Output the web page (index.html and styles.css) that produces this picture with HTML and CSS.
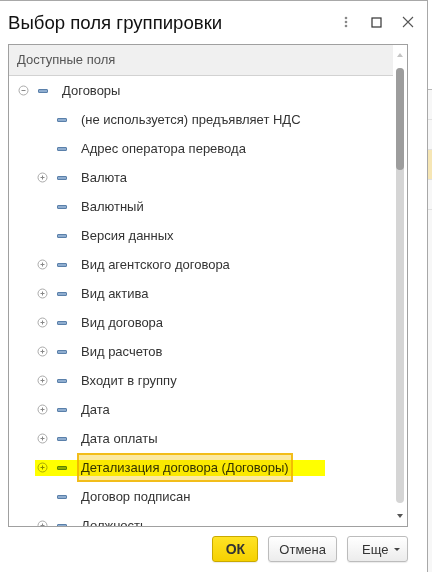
FILE: index.html
```html
<!DOCTYPE html>
<html lang="ru">
<head>
  <meta charset="UTF-8" />
  <meta name="viewport" content="width=device-width, initial-scale=1.0" />
  <title>Выбор поля группировки</title>
  <link rel="stylesheet" href="styles.css">
</head>
<body>
  <div class="screen">
    <div class="dialog">
      <div class="titlebar">
        <h1>Выбор поля группировки</h1>
        <div class="tools">
          <span class="tool">
            <svg width="4" height="12" viewBox="0 0 4 12"><circle cx="2" cy="2" r="1.3" fill="#888"/><circle cx="2" cy="6" r="1.3" fill="#888"/><circle cx="2" cy="10" r="1.3" fill="#888"/></svg>
          </span>
          <span class="tool">
            <svg width="11" height="11" viewBox="0 0 11 11"><rect x="1" y="1" width="9" height="9" fill="none" stroke="#333" stroke-width="1.2"/></svg>
          </span>
          <span class="tool">
            <svg width="12" height="12" viewBox="0 0 12 12"><path d="M1 1 L11 11 M11 1 L1 11" stroke="#555" stroke-width="1.1"/></svg>
          </span>
        </div>
      </div>

      <div class="panel">
        <div class="list">
          <div class="list-head">Доступные поля</div>
          <div class="tree">
            <div class="row lvl0">
              <span class="toggle"><svg width="11" height="11" viewBox="0 0 11 11"><circle cx="5.5" cy="5.5" r="4.5" fill="#fff" stroke="#aaa"/><path d="M3.5 5.5 H7.5" stroke="#888"/></svg></span>
              <span class="icon"><i class="bar"></i></span>
              <span class="label">Договоры</span>
            </div>
            <div class="row lvl1">
              <span class="toggle"></span>
              <span class="icon"><i class="bar"></i></span>
              <span class="label">(не используется) предъявляет НДС</span>
            </div>
            <div class="row lvl1">
              <span class="toggle"></span>
              <span class="icon"><i class="bar"></i></span>
              <span class="label">Адрес оператора перевода</span>
            </div>
            <div class="row lvl1">
              <span class="toggle"><svg width="11" height="11" viewBox="0 0 11 11"><circle cx="5.5" cy="5.5" r="4.5" fill="#fff" stroke="#aaa"/><path d="M3.5 5.5 H7.5 M5.5 3.5 V7.5" stroke="#888"/></svg></span>
              <span class="icon"><i class="bar"></i></span>
              <span class="label">Валюта</span>
            </div>
            <div class="row lvl1">
              <span class="toggle"></span>
              <span class="icon"><i class="bar"></i></span>
              <span class="label">Валютный</span>
            </div>
            <div class="row lvl1">
              <span class="toggle"></span>
              <span class="icon"><i class="bar"></i></span>
              <span class="label">Версия данных</span>
            </div>
            <div class="row lvl1">
              <span class="toggle"><svg width="11" height="11" viewBox="0 0 11 11"><circle cx="5.5" cy="5.5" r="4.5" fill="#fff" stroke="#aaa"/><path d="M3.5 5.5 H7.5 M5.5 3.5 V7.5" stroke="#888"/></svg></span>
              <span class="icon"><i class="bar"></i></span>
              <span class="label">Вид агентского договора</span>
            </div>
            <div class="row lvl1">
              <span class="toggle"><svg width="11" height="11" viewBox="0 0 11 11"><circle cx="5.5" cy="5.5" r="4.5" fill="#fff" stroke="#aaa"/><path d="M3.5 5.5 H7.5 M5.5 3.5 V7.5" stroke="#888"/></svg></span>
              <span class="icon"><i class="bar"></i></span>
              <span class="label">Вид актива</span>
            </div>
            <div class="row lvl1">
              <span class="toggle"><svg width="11" height="11" viewBox="0 0 11 11"><circle cx="5.5" cy="5.5" r="4.5" fill="#fff" stroke="#aaa"/><path d="M3.5 5.5 H7.5 M5.5 3.5 V7.5" stroke="#888"/></svg></span>
              <span class="icon"><i class="bar"></i></span>
              <span class="label">Вид договора</span>
            </div>
            <div class="row lvl1">
              <span class="toggle"><svg width="11" height="11" viewBox="0 0 11 11"><circle cx="5.5" cy="5.5" r="4.5" fill="#fff" stroke="#aaa"/><path d="M3.5 5.5 H7.5 M5.5 3.5 V7.5" stroke="#888"/></svg></span>
              <span class="icon"><i class="bar"></i></span>
              <span class="label">Вид расчетов</span>
            </div>
            <div class="row lvl1">
              <span class="toggle"><svg width="11" height="11" viewBox="0 0 11 11"><circle cx="5.5" cy="5.5" r="4.5" fill="#fff" stroke="#aaa"/><path d="M3.5 5.5 H7.5 M5.5 3.5 V7.5" stroke="#888"/></svg></span>
              <span class="icon"><i class="bar"></i></span>
              <span class="label">Входит в группу</span>
            </div>
            <div class="row lvl1">
              <span class="toggle"><svg width="11" height="11" viewBox="0 0 11 11"><circle cx="5.5" cy="5.5" r="4.5" fill="#fff" stroke="#aaa"/><path d="M3.5 5.5 H7.5 M5.5 3.5 V7.5" stroke="#888"/></svg></span>
              <span class="icon"><i class="bar"></i></span>
              <span class="label">Дата</span>
            </div>
            <div class="row lvl1">
              <span class="toggle"><svg width="11" height="11" viewBox="0 0 11 11"><circle cx="5.5" cy="5.5" r="4.5" fill="#fff" stroke="#aaa"/><path d="M3.5 5.5 H7.5 M5.5 3.5 V7.5" stroke="#888"/></svg></span>
              <span class="icon"><i class="bar"></i></span>
              <span class="label">Дата оплаты</span>
            </div>
            <div class="row lvl1 current">
              <span class="toggle"><svg width="11" height="11" viewBox="0 0 11 11"><circle cx="5.5" cy="5.5" r="4.5" fill="#fff" stroke="#aaa"/><path d="M3.5 5.5 H7.5 M5.5 3.5 V7.5" stroke="#888"/></svg></span>
              <span class="icon"><i class="bar"></i></span>
              <span class="label">Детализация договора (Договоры)</span>
              <span class="marker"></span>
            </div>
            <div class="row lvl1">
              <span class="toggle"></span>
              <span class="icon"><i class="bar"></i></span>
              <span class="label">Договор подписан</span>
            </div>
            <div class="row lvl1">
              <span class="toggle"><svg width="11" height="11" viewBox="0 0 11 11"><circle cx="5.5" cy="5.5" r="4.5" fill="#fff" stroke="#aaa"/><path d="M3.5 5.5 H7.5 M5.5 3.5 V7.5" stroke="#888"/></svg></span>
              <span class="icon"><i class="bar"></i></span>
              <span class="label">Должность</span>
            </div>
          </div>
        </div>
        <div class="scrollbar">
          <span class="arrow up"></span>
          <div class="track"><div class="thumb"></div></div>
          <span class="arrow down"></span>
        </div>
      </div>

      <div class="footer">
        <button class="btn btn-ok">ОК</button>
        <button class="btn">Отмена</button>
        <button class="btn btn-more">Еще <span class="caret"></span></button>
      </div>
    </div>

    <div class="behind">
      <div class="b-top"></div>
      <div class="b-row"></div>
      <div class="b-row"></div>
      <div class="b-row b-sel"></div>
      <div class="b-row"></div>
    </div>
  </div>
</body>
</html>
```

FILE: styles.css
```css
body {
  margin: 0;
  padding: 0;
  font-family: 'Liberation Sans', Arial, sans-serif;
  background: #f7f7f7;
  color: #333;
}
.screen {
  display: flex;
  width: 432px;
  height: 572px;
  overflow: hidden;
}
.dialog {
  width: 427px;
  height: 572px;
  flex-shrink: 0;
  background: #fff;
  border-top: 1px solid #a8a8a8;
  border-right: 1px solid #a8a8a8;
}
.titlebar {
  height: 43px;
  display: flex;
  justify-content: space-between;
  align-items: flex-start;
}
h1 {
  margin: 0;
  padding: 11px 0 0 8px;
  font-size: 18.6px;
  line-height: 21px;
  font-weight: normal;
  color: #111;
}
.tools {
  display: flex;
  padding: 11px 4px 0 0;
}
.tool {
  width: 31px;
  height: 20px;
  display: flex;
  align-items: center;
  justify-content: center;
}
.panel {
  margin-left: 8px;
  width: 398px;
  height: 481px;
  border: 1px solid #a0a0a0;
  display: flex;
}
.list {
  width: 384px;
  overflow: hidden;
}
.list-head {
  height: 30px;
  line-height: 30px;
  padding-left: 8px;
  background: #f0f0f0;
  border-bottom: 1px solid #d2d2d2;
  font-size: 13px;
  color: #555;
}
.tree {
  height: 450px;
  overflow: hidden;
}
.row {
  position: relative;
  height: 29px;
  display: flex;
  align-items: center;
  font-size: 13px;
  white-space: nowrap;
}
.lvl0 { padding-left: 5px; }
.lvl1 { padding-left: 24px; }
.toggle, .icon {
  width: 19px;
  height: 29px;
  display: flex;
  align-items: center;
  justify-content: center;
  flex-shrink: 0;
}
.bar {
  display: block;
  width: 8px;
  height: 2px;
  border: 1px solid #5a80aa;
  border-radius: 1px;
  background: #8fadcf;
}
.label {
  margin-left: 6px;
  padding: 0 2px;
  height: 29px;
  line-height: 25px;
  box-sizing: border-box;
  border: 2px solid transparent;
  color: #333;
}
.current .label {
  background: #fbe9a2;
  border-color: #f2bd1a;
}
.marker {
  position: absolute;
  left: 26px;
  top: 7px;
  width: 290px;
  height: 16px;
  background: #ffff00;
  mix-blend-mode: multiply;
}
.scrollbar {
  width: 14px;
  display: flex;
  flex-direction: column;
  align-items: center;
}
.arrow {
  height: 20px;
  display: flex;
  align-items: center;
  justify-content: center;
}
.arrow::before {
  content: '';
  border-left: 3px solid transparent;
  border-right: 3px solid transparent;
}
.arrow.up::before { border-bottom: 4px solid #c4c4c4; }
.arrow.down::before { border-top: 4px solid #555; }
.track {
  flex: 1;
  width: 8px;
  margin: 3px 0;
  background: #d5d5d5;
  border-radius: 4px;
}
.thumb {
  height: 102px;
  background: #9d9d9d;
  border-radius: 4px;
}
.footer {
  display: flex;
  justify-content: flex-end;
  gap: 10px;
  width: 408px;
  margin-top: 9px;
}
.btn {
  height: 26px;
  padding: 0 10px;
  font-family: 'Liberation Sans', Arial, sans-serif;
  font-size: 13px;
  color: #333;
  background: linear-gradient(#ffffff, #ececec);
  border: 1px solid #bcbcbc;
  border-radius: 3px;
  box-shadow: 0 1px 1px rgba(0, 0, 0, 0.08);
}
.btn-ok {
  width: 46px;
  font-weight: bold;
  font-size: 14px;
  background: linear-gradient(#ffe326, #f6d100);
  border-color: #c9a900;
}
.btn-more {
  width: 61px;
  display: flex;
  align-items: center;
  gap: 6px;
  padding-left: 14px;
}
.caret {
  border-left: 3px solid transparent;
  border-right: 3px solid transparent;
  border-top: 3px solid #444;
}
.behind {
  flex: 1;
  display: flex;
  flex-direction: column;
}
.b-top {
  height: 89px;
  background: #fff;
  border-bottom: 1px solid #b8b8b8;
}
.b-row {
  height: 29px;
  border-bottom: 1px solid #e0e0e0;
}
.b-sel {
  background: #f6e6b5;
}
```
